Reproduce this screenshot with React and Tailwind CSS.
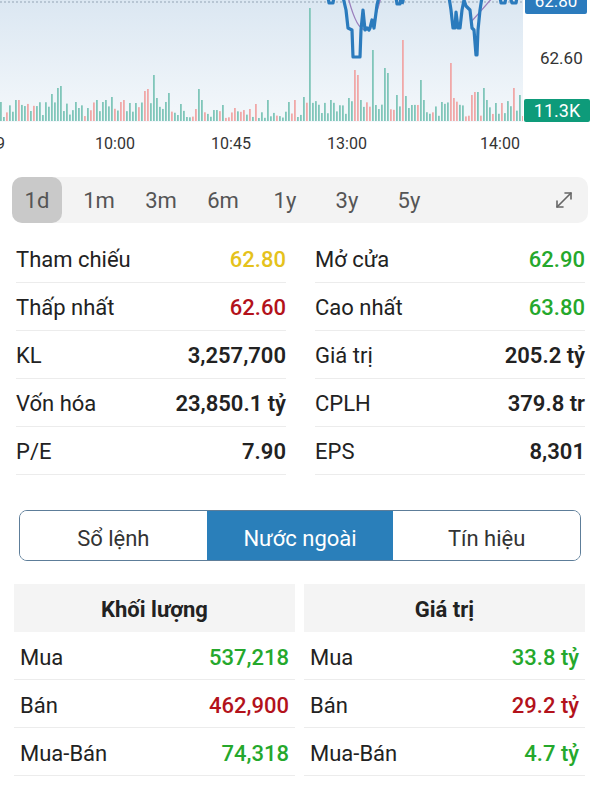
import { MoveDiagonal } from 'lucide-react';

const SPIKES = [
  [0, 102, 't'], [14, 100, 't'], [19, 100, 'p'], [50, 94, 't'], [56, 88, 't'], [59, 86, 't'],
  [79, 108, 't'], [96, 100, 't'], [101, 102, 't'], [106, 100, 't'], [112, 97, 't'], [120, 102, 'p'],
  [122, 100, 'p'], [128, 103, 't'], [136, 103, 't'], [145, 91, 'p'], [147, 89, 'p'], [154, 75, 't'],
  [156, 98, 't'], [167, 93, 't'], [179, 104, 't'], [197, 89, 't'], [200, 100, 't'], [223, 105, 't'],
  [233, 108, 'p'], [250, 109, 'p'], [256, 104, 'p'], [267, 100, 't'], [287, 102, 't'], [293, 100, 'p'],
  [303, 97, 't'], [310, 8, 't'], [330, 100, 't'], [347, 30, 't'], [349, 98, 't'], [354, 70, 'p'],
  [357, 75, 'p'], [360, 100, 't'], [372, 50, 't'], [376, 105, 't'], [383, 68, 't'], [386, 73, 't'],
  [395, 95, 't'], [403, 40, 'p'], [405, 96, 't'], [410, 105, 't'], [420, 80, 't'], [424, 100, 't'],
  [440, 102, 't'], [449, 63, 'p'], [452, 90, 'p'], [454, 98, 'p'], [470, 95, 'p'], [475, 92, 'p'],
  [478, 92, 't'], [483, 88, 't'], [487, 100, 't'], [495, 103, 't'], [500, 103, 'p'], [513, 88, 'p'],
  [519, 95, 't'],
];

function makeBars() {
  let seed = 7;
  const rnd = () => {
    seed = (seed * 16807) % 2147483647;
    return seed / 2147483647;
  };
  const spikeAt = {};
  SPIKES.forEach(([x, y, c]) => { spikeAt[Math.round(x / 3)] = [y, c]; });
  const bars = [];
  for (let i = 0; i < 175; i++) {
    const x = i * 3;
    if (spikeAt[i]) {
      bars.push({ x, y: spikeAt[i][0], c: spikeAt[i][1] });
      continue;
    }
    const quiet = x > 170 && x < 300;
    const h = quiet ? 2 + rnd() * 9 : 3 + rnd() * 16;
    bars.push({ x, y: 120 - h, c: rnd() < 0.28 ? 'p' : 't' });
  }
  return bars;
}

const BARS = makeBars();

function Chart() {
  return (
    <div className="flex h-[122px]">
      <div className="relative h-full w-[523px] bg-linear-to-b from-[#dbe7f2] to-[#f4f8fb]">
        <svg width="523" height="122" className="absolute inset-0">
          <line x1="0" y1="2" x2="523" y2="2" stroke="#93a4b5" strokeWidth="1" strokeDasharray="2 2" />
          {BARS.map((b, i) => (
            <rect key={i} x={b.x} y={b.y} width="1.8" height={121 - b.y} fill={b.c === 'p' ? '#f0a8a8' : '#80c6ba'} />
          ))}
          <path d="M348,-3 Q365,62 381,-3" fill="none" stroke="#9b7fbd" strokeWidth="1.3" />
          <path d="M471,22 Q480,12 493,-3" fill="none" stroke="#9b7fbd" strokeWidth="1.3" />
          <g fill="none" stroke="#2b7bbd" strokeWidth="3.2" strokeLinejoin="round">
            <path d="M328,-3 L329,3 L333,3 L334,-3" />
            <path d="M343,-3 L346,10 L348,28 L352,30 L353,57 L360,57 L361,30 L363,10 L365,30 L367,28 L369,30 L370,28 L372,20 L374,28 L377,5 L379,-3" />
            <path d="M396,-3 L397,4 L400,4 L401,-3 M402,4 L404,-3" />
            <path d="M449,-3 L451,10 L453,28 L455,28 L456,12 L458,28 L460,28 L462,10 L464,0 L466,6 L470,10 L472,28 L474,30 L476,55 L477,55 L478,30 L480,10 L482,-3" />
            <path d="M500,-3 L501,3 L505,3 L506,-3 M510,-3 L512,3 L516,3 L517,-3" />
          </g>
        </svg>
      </div>
      <div className="relative h-full flex-1 bg-white">
        <div className="absolute left-[2px] top-[-10px] flex h-[24px] w-[62px] items-center justify-center rounded-[2px] bg-[#2b7bbd] text-[17px] text-white">62.80</div>
        <div className="absolute left-[17px] top-[46px] text-[17px] text-[#333]">62.60</div>
        <div className="absolute bottom-0 left-[1px] flex h-[23px] w-[66px] items-center justify-center rounded-[2px] bg-[#0e9b7a] text-[18px] text-white">11.3K</div>
      </div>
    </div>
  );
}

function TimeAxis() {
  const labels = [['10:00', 115], ['10:45', 231], ['13:00', 347], ['14:00', 500]];
  return (
    <div className="relative h-[40px] text-[16px] text-[#333]">
      <span className="absolute left-[-4px] top-[10px]">9</span>
      {labels.map(([t, x]) => (
        <span key={t} className="absolute top-[10px] w-[60px] -translate-x-1/2 text-center" style={{ left: x }}>{t}</span>
      ))}
    </div>
  );
}

function RangeBar() {
  const ranges = ['1d', '1m', '3m', '6m', '1y', '3y', '5y'];
  return (
    <div className="mx-[12px] mt-[15px] flex h-[46px] items-center rounded-[10px] bg-[#f3f3f3] pr-[12px]">
      <div className="flex h-full items-center gap-[12px]">
        {ranges.map((r, i) => (
          <div
            key={r}
            className={`flex h-full w-[50px] items-center justify-center rounded-[10px] text-[22px] text-[#555] ${i === 0 ? 'bg-[#c9c9c9]' : ''}`}
          >
            {r}
          </div>
        ))}
      </div>
      <div className="flex-1" />
      <MoveDiagonal size={24} strokeWidth={1.6} className="text-[#666]" />
    </div>
  );
}

const GREEN = 'text-[#25a82c] font-medium';
const RED = 'text-[#b3121b] font-medium';
const YELLOW = 'text-[#e5c21c] font-medium';
const DARK = 'text-[#222] font-semibold';

const STATS = [
  [['Tham chiếu', '62.80', YELLOW], ['Mở cửa', '62.90', GREEN]],
  [['Thấp nhất', '62.60', RED], ['Cao nhất', '63.80', GREEN]],
  [['KL', '3,257,700', DARK], ['Giá trị', '205.2 tỷ', DARK]],
  [['Vốn hóa', '23,850.1 tỷ', DARK], ['CPLH', '379.8 tr', DARK]],
  [['P/E', '7.90', DARK], ['EPS', '8,301', DARK]],
];

function StatCell({ label, value, color }) {
  return (
    <div className="flex h-[48px] items-center justify-between border-b border-[#ececec] pt-[1px] text-[22px]">
      <span className="text-[#222]">{label}</span>
      <span className={color}>{value}</span>
    </div>
  );
}

function Stats() {
  return (
    <div className="mt-[12px] grid grid-cols-2 gap-x-[29px] pl-[16px] pr-[15px]">
      {STATS.map((row) =>
        row.map(([l, v, c]) => <StatCell key={l} label={l} value={v} color={c} />)
      )}
    </div>
  );
}

function Tabs() {
  const tabs = ['Sổ lệnh', 'Nước ngoài', 'Tín hiệu'];
  return (
    <div className="mx-[19px] mt-[35px] grid h-[51px] grid-cols-3 overflow-hidden rounded-[8px] border-[1.5px] border-[#5d7d99]">
      {tabs.map((t, i) => (
        <div
          key={t}
          className={`flex items-center justify-center pt-[5px] text-[22px] ${i === 1 ? 'bg-[#2a7fba] text-white' : 'bg-white text-[#333]'}`}
        >
          {t}
        </div>
      ))}
    </div>
  );
}

function ForeignTable({ title, rows }) {
  return (
    <div>
      <div className="flex h-[48px] items-center justify-center bg-[#f4f4f4] pt-[2px] text-[22px] font-bold text-[#222]">{title}</div>
      {rows.map(([l, v, c]) => (
        <div key={l} className="flex h-[48px] items-center justify-between border-b border-[#ececec] px-[6px] pt-[4px] text-[22px]">
          <span className="text-[#222]">{l}</span>
          <span className={c}>{v}</span>
        </div>
      ))}
    </div>
  );
}

export default function App() {
  return (
    <div className="h-[800px] w-[600px] overflow-hidden bg-white font-['Roboto',sans-serif]">
      <Chart />
      <TimeAxis />
      <RangeBar />
      <Stats />
      <Tabs />
      <div className="mt-[23px] grid grid-cols-2 gap-x-[9px] pl-[14px] pr-[15px]">
        <ForeignTable
          title="Khối lượng"
          rows={[['Mua', '537,218', GREEN], ['Bán', '462,900', RED], ['Mua-Bán', '74,318', GREEN]]}
        />
        <ForeignTable
          title="Giá trị"
          rows={[['Mua', '33.8 tỷ', GREEN], ['Bán', '29.2 tỷ', RED], ['Mua-Bán', '4.7 tỷ', GREEN]]}
        />
      </div>
    </div>
  );
}
